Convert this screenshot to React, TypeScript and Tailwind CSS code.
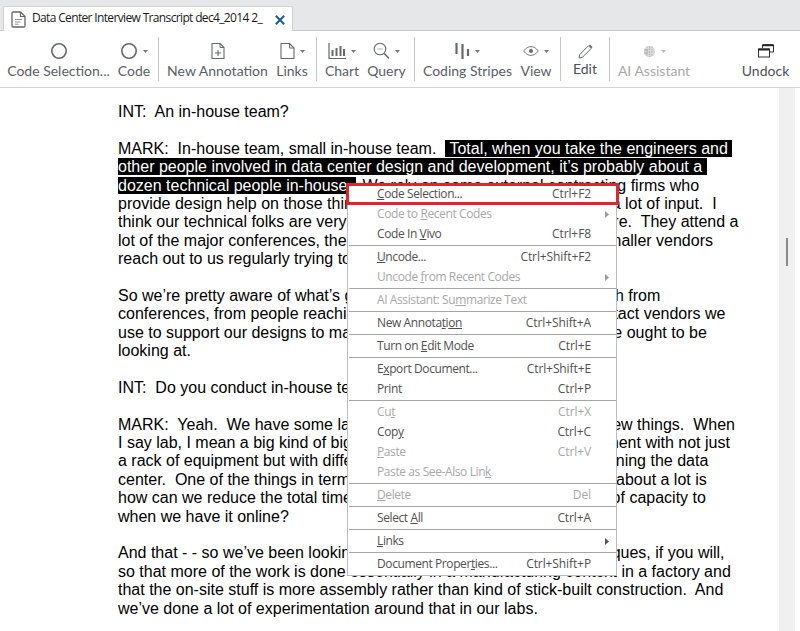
import React from "react";

const S = "#666a6e";

function Caret({ color = "#7a7a7a" }: { color?: string }) {
  return (
    <svg width="5" height="3" viewBox="0 0 5 3" className="ml-[5px] shrink-0">
      <path d="M0 0H5L2.5 3Z" fill={color} />
    </svg>
  );
}

const icons: Record<string, React.ReactNode> = {
  circle: (
    <svg width="18" height="18" viewBox="0 0 18 18" fill="none">
      <circle cx="9" cy="9" r="7.2" stroke={S} strokeWidth="1.6" />
    </svg>
  ),
  add: (
    <svg width="14" height="18" viewBox="0 0 14 18" fill="none">
      <path d="M1 1.5H9L13 5.5V16.5H1Z" stroke={S} strokeWidth="1.1" strokeLinejoin="round" />
      <path d="M9 1.5V5.5H13" stroke={S} strokeWidth="1" />
      <path d="M7 8V14M4 11H10" stroke={S} strokeWidth="1.1" />
    </svg>
  ),
  page: (
    <svg width="15" height="18" viewBox="0 0 15 18" fill="none">
      <path d="M1 1.5H9.5L14 6V16.5H1Z" stroke={S} strokeWidth="1.1" strokeLinejoin="round" />
      <path d="M9.5 1.5V6H14" stroke={S} strokeWidth="1" />
    </svg>
  ),
  chart: (
    <svg width="18" height="18" viewBox="0 0 18 18" fill="none">
      <path d="M1 1V16.5H18" stroke={S} strokeWidth="1.2" />
      <path d="M4.5 8V14M8.5 6V14M12.5 4V14M16 7V14" stroke={S} strokeWidth="2" />
    </svg>
  ),
  query: (
    <svg width="17" height="18" viewBox="0 0 17 18" fill="none">
      <circle cx="7" cy="7" r="5.8" stroke={S} strokeWidth="1.1" />
      <path d="M11.2 11.5L16 16.5" stroke={S} strokeWidth="1.6" />
      <path d="M4.5 7H5.5M6.5 7H7.5M8.5 7H9.5" stroke={S} strokeWidth="1" />
    </svg>
  ),
  stripes: (
    <svg width="15" height="17" viewBox="0 0 15 17" fill="none">
      <path d="M1.5 0V11M7.5 1V16M13 6V13" stroke={S} strokeWidth="2.2" />
    </svg>
  ),
  eye: (
    <svg width="16" height="10" viewBox="0 0 16 10" fill="none">
      <path d="M0.7 5C3 1.8 5.5 0.6 8 0.6S13 1.8 15.3 5C13 8.2 10.5 9.4 8 9.4S3 8.2 0.7 5Z" stroke={S} strokeWidth="0.9" />
      <circle cx="8" cy="5" r="2" fill={S} />
    </svg>
  ),
  pencil: (
    <svg width="15" height="15" viewBox="0 0 15 15" fill="none">
      <path d="M1 14L1.8 10.5L10.5 1.8L13.2 4.5L4.5 13.2Z" stroke={S} strokeWidth="1" strokeLinejoin="round" />
      <path d="M10.8 1.5L12 0.5L14.5 3L13.4 4.3Z" fill={S} />
    </svg>
  ),
  ai: (
    <svg width="13" height="13" viewBox="0 0 13 13" fill="none">
      <circle cx="6.5" cy="6.5" r="5.5" fill="#d8d8d8" />
      <path d="M4 1.5V11.5M6.5 1V12M9 1.5V11.5" stroke="#b4b4b4" strokeWidth="1" strokeDasharray="1.5 1" />
      <path d="M1 5H5M1 8H5" stroke="#a8a8a8" strokeWidth="1" />
    </svg>
  ),
  undock: (
    <svg width="16" height="14" viewBox="0 0 16 14" fill="none">
      <path d="M4.5 4V1H15.5V8H12" stroke="#333" strokeWidth="1" />
      <path d="M4.5 1.2H15.5" stroke="#222" strokeWidth="2" />
      <rect x="0.5" y="5" width="11" height="8" stroke="#333" strokeWidth="1" />
      <path d="M0.5 5.5H11.5" stroke="#222" strokeWidth="2" />
    </svg>
  ),
};

function Tool({
  label,
  icon,
  caret,
  w,
  disabled,
  edit,
  dark,
}: {
  label: string;
  icon: string;
  caret?: boolean;
  w: string;
  disabled?: boolean;
  edit?: boolean;
  dark?: boolean;
}) {
  return (
    <div className={`flex flex-col items-center shrink-0 ${w}`}>
      <div className="flex items-center justify-center h-[22px] mt-[3px]">
        {icons[icon]}
        {caret && <Caret color={disabled ? "#bcbcbc" : "#7a7a7a"} />}
      </div>
      <div
        className={`whitespace-nowrap text-[14px] leading-[18px] ${edit ? "mt-[-2px]" : ""} ${
          disabled ? "text-[#a9a9a9]" : dark ? "text-[#4c5157]" : "text-[#5a6068]"
        }`}
      >
        {label}
      </div>
    </div>
  );
}

const Sep = () => <div className="w-px h-[44px] bg-[#c4c6c8] shrink-0" />;

type Row = {
  t: React.ReactNode;
  k?: string;
  off?: boolean;
  arrow?: boolean;
};

const groups: Row[][] = [
  [
    { t: <><u>C</u>ode Selection...</>, k: "Ctrl+F2" },
    { t: <>Code to <u>R</u>ecent Codes</>, off: true, arrow: true },
    { t: <>Code In <u>V</u>ivo</>, k: "Ctrl+F8" },
  ],
  [
    { t: <><u>U</u>ncode...</>, k: "Ctrl+Shift+F2" },
    { t: <>Uncode <u>f</u>rom Recent Codes</>, off: true, arrow: true },
  ],
  [{ t: <>AI Assistant: Su<u>m</u>marize Text</>, off: true }],
  [{ t: <>New Annota<u>t</u>i<u>on</u></>, k: "Ctrl+Shift+A" }],
  [{ t: <>Turn on <u>E</u>dit Mode</>, k: "Ctrl+E" }],
  [
    { t: <>E<u>x</u>port Document...</>, k: "Ctrl+Shift+E" },
    { t: <>Print</>, k: "Ctrl+P" },
  ],
  [
    { t: <>Cu<u>t</u></>, k: "Ctrl+X", off: true },
    { t: <>Cop<u>y</u></>, k: "Ctrl+C" },
    { t: <><u>P</u>aste</>, k: "Ctrl+V", off: true },
    { t: <>Paste as See-Also Lin<u>k</u></>, off: true },
  ],
  [{ t: <><u>D</u>elete</>, k: "Del", off: true }],
  [{ t: <>Select <u>A</u>ll</>, k: "Ctrl+A" }],
  [{ t: <><u>L</u>inks</>, arrow: true }],
  [{ t: <>Document Proper<u>t</u>ies...</>, k: "Ctrl+Shift+P" }],
];

function Menu() {
  return (
    <div className="absolute left-[347px] top-[183px] w-[270px] h-[393px] bg-white border border-[#bdbdbd] font-['Open_Sans',sans-serif] text-[12px]">
      {groups.map((g, i) => (
        <div key={i}>
          {i > 0 && <div className="h-px bg-[#a6a6a6] my-px ml-[1px]" />}
          {g.map((r, j) => (
            <div
              key={j}
              className={`flex items-center h-[20px] pl-[29px] pr-[25px] relative ${
                r.off ? "text-[#a8a8a8]" : "text-[#505050]"
              }`}
            >
              <span className="whitespace-nowrap tracking-[-0.4px]">{r.t}</span>
              {r.k && <span className="ml-auto whitespace-nowrap tracking-[-0.1px]">{r.k}</span>}
              {r.arrow && (
                <svg width="4" height="7" viewBox="0 0 4 7" className="absolute right-[7px] top-[7px]">
                  <path d="M0 0L4 3.5L0 7Z" fill={r.off ? "#9a9a9a" : "#555"} />
                </svg>
              )}
            </div>
          ))}
        </div>
      ))}
      <div className="absolute left-[-2px] top-[-1px] w-[273px] h-[22px] border-[3px] border-[#e0262c]" />
    </div>
  );
}

const Sel = ({ children }: { children: React.ReactNode }) => (
  <span className="bg-black text-white">{children}</span>
);

const L = ({ children }: { children?: React.ReactNode }) => <div className="h-[18.4px]">{children}</div>;

export default function App() {
  return (
    <div className="w-[800px] h-[631px] overflow-hidden relative flex flex-col bg-white font-['Lato',sans-serif]">
      <div className="h-[31px] bg-[#e6e7e9] border-b border-[#c6c8ca] shrink-0 flex items-end pl-[3px]">
        <div className="w-[290px] h-[25px] mb-[-1px] bg-white border border-b-0 border-[#d0d0d0] rounded-t-[2px] flex items-center pl-[7px] pr-[5px]">
          <svg width="15" height="17" viewBox="0 0 15 17" fill="none" className="shrink-0">
            <path d="M1 2.2Q1 1 2.2 1H9.5L14 5.5V14.8Q14 16 12.8 16H2.2Q1 16 1 14.8Z" stroke="#666" strokeWidth="1.3" strokeLinejoin="round" />
            <path d="M9.5 1V5.5H14" stroke="#666" strokeWidth="1.1" />
            <path d="M4 8.5H11M4 11H9.5M4 13.2H7.5" stroke="#888" strokeWidth="0.9" />
          </svg>
          <span className="ml-[6px] mb-[3px] text-[12px] text-[#1a1a1a] whitespace-nowrap font-['Open_Sans',sans-serif] tracking-[-0.65px]">
            Data Center Interview Transcript dec4_2014 2_
          </span>
          <svg width="10" height="10" viewBox="0 0 10 10" className="ml-auto mr-[2px] mt-[1px] shrink-0">
            <path d="M0.8 0.8L9.2 9.2M9.2 0.8L0.8 9.2" stroke="#1c5c9c" strokeWidth="2" />
          </svg>
        </div>
      </div>

      <div className="h-[57px] shrink-0 border-b-[1px] border-[#d4d4d4] flex items-start pt-[6px] pl-[7px] relative">
        <div className="flex items-start h-[44px] gap-[8px]">
          <Tool label="Code Selection..." icon="circle" w="w-[103px]" />
          <Tool label="Code" icon="circle" caret w="w-[32px]" />
          <Sep />
          <Tool label="New Annotation" icon="add" w="w-[101px]" />
          <Tool label="Links" icon="page" caret w="w-[32px]" />
          <Sep />
          <Tool label="Chart" icon="chart" caret w="w-[34px]" />
          <Tool label="Query" icon="query" caret w="w-[39px]" />
          <Sep />
          <Tool label="Coding Stripes" icon="stripes" caret w="w-[89px]" />
          <Tool label="View" icon="eye" caret w="w-[32px]" />
          <Sep />
          <Tool label="Edit" icon="pencil" w="w-[32px]" edit dark />
          <Sep />
          <Tool label="AI Assistant" icon="ai" caret w="w-[72px]" disabled />
          <div className="w-[36px] shrink-0" />
          <Tool label="Undock" icon="undock" w="w-[47px]" dark />
        </div>
      </div>

      <div className="flex-1 min-h-0 flex">
        <div className="w-[779px] pl-[118px] pt-[15px] overflow-hidden font-['Liberation_Sans',sans-serif] text-[16px] leading-[18.4px] text-black whitespace-pre">
          <L>INT:  An in-house team?</L>
          <L />
          <L>MARK:  In-house team, small in-house team.  <Sel> Total, when you take the engineers and </Sel></L>
          <L><Sel>other people involved in data center design and development, it’s probably about a </Sel></L>
          <L><Sel>dozen technical people in-house. </Sel><span className="ml-[6px]">We rely on some external contracting firms who</span></L>
          <L>provide design help on those things and so on some jobs we also get a lot of input.  I</L>
          <L>think our technical folks are very well versed on the state of the art there.  They attend a</L>
          <L>lot of the major conferences, the trade shows, and a lot of the many smaller vendors</L>
          <L>reach out to us regularly trying to sell us on what they have.</L>
          <L />
          <L>So we’re pretty aware of what’s going on out there on the markets, both from</L>
          <L>conferences, from people reaching out to us, and also from all the contact vendors we</L>
          <L>use to support our designs to make sure  that we always know what we ought to be</L>
          <L>looking at.</L>
          <L />
          <L>INT:  Do you conduct in-house testing?</L>
          <L />
          <L>MARK:  Yeah.  We have some labs where we can go and try out the new things.  When</L>
          <L>I say lab, I mean a big kind of big warehouse type of real test environment with not just</L>
          <L>a rack of equipment but with different kinds of ways of trying and designing the data</L>
          <L>center.  One of the things in terms of the testing that we all really think about a lot is</L>
          <L>how can we reduce the total time from when we first need a big block of capacity to</L>
          <L>when we have it online?</L>
          <L />
          <L>And that - - so we’ve been looking at a lot of new prefabrication techniques, if you will,</L>
          <L>so that more of the work is done essentially in a manufacturing context in a factory and</L>
          <L>that the on-site stuff is more assembly rather than kind of stick-built construction.  And</L>
          <L>we’ve done a lot of experimentation around that in our labs.</L>
        </div>
        <div className="w-[16px] bg-[#f0f0f0] shrink-0 pt-[150px] flex justify-center">
          <div className="w-[2px] h-[28px] bg-[#8a8a8a]" />
        </div>
      </div>

      <Menu />
    </div>
  );
}
